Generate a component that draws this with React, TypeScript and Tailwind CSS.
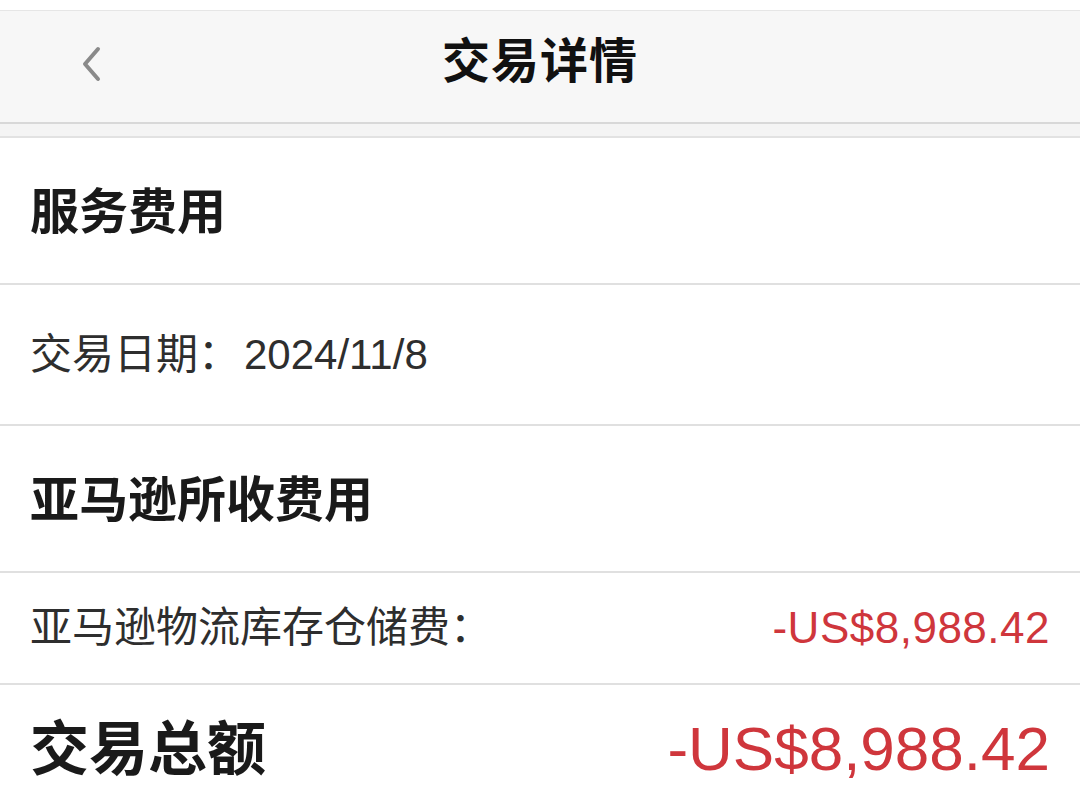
import React from "react";

const font = { fontFamily: '"Liberation Sans", "Noto Sans CJK SC", sans-serif' };

export default function App() {
  return (
    <div
      className="w-[1080px] h-[810px] overflow-hidden bg-white flex flex-col"
      style={font}
    >
      <div className="h-[10px] bg-white shrink-0" />
      <div className="h-[114px] shrink-0 bg-[#f7f7f7] border-t border-[#e6e6e6] border-b-2 border-b-[#d8d8d8] relative flex items-center justify-center pb-[10px]">
        <svg
          className="absolute left-[78px] top-[33px]"
          width="26"
          height="40"
          viewBox="0 0 26 40"
        >
          <path d="M20 5 L7 20 L20 35" fill="none" stroke="#8a8a8a" strokeWidth="4" strokeLinecap="round" strokeLinejoin="round" />
        </svg>
        <span className="text-[48px] font-bold text-[#111] leading-none tracking-[1px]">交易详情</span>
      </div>
      <div className="h-[14px] shrink-0 bg-[#f4f4f4] border-b-2 border-[#e2e2e2]" />

      <div className="h-[147px] shrink-0 flex items-center pl-[30px] border-b-2 border-[#e0e0e0]">
        <span className="text-[49px] font-bold text-[#1a1a1a] leading-none mt-[4px]">服务费用</span>
      </div>

      <div className="h-[141px] shrink-0 flex items-center pl-[30px] border-b-2 border-[#e0e0e0]">
        <span className="text-[42px] text-[#2e2e2e] leading-none">
          交易日期：<span className="ml-[4px]">2024/11/8</span>
        </span>
      </div>

      <div className="h-[147px] shrink-0 flex items-center pl-[30px] border-b-2 border-[#e0e0e0]">
        <span className="text-[49px] font-bold text-[#1a1a1a] leading-none mt-[4px]">亚马逊所收费用</span>
      </div>

      <div className="h-[112px] shrink-0 flex items-center justify-between pl-[30px] pr-[30px] border-b-2 border-[#e0e0e0]">
        <span className="text-[42px] text-[#2e2e2e] leading-none">亚马逊物流库存仓储费：</span>
        <span className="text-[44px] text-[#cf363c] leading-none tracking-[0.5px]">-US$8,988.42</span>
      </div>

      <div className="h-[130px] shrink-0 flex items-center justify-between pl-[30px] pr-[30px] pb-[2px]">
        <span className="text-[59px] font-bold text-[#1a1a1a] leading-none mt-[2px]">交易总额</span>
        <span className="text-[62px] text-[#cf363c] leading-none">-US$8,988.42</span>
      </div>
    </div>
  );
}
